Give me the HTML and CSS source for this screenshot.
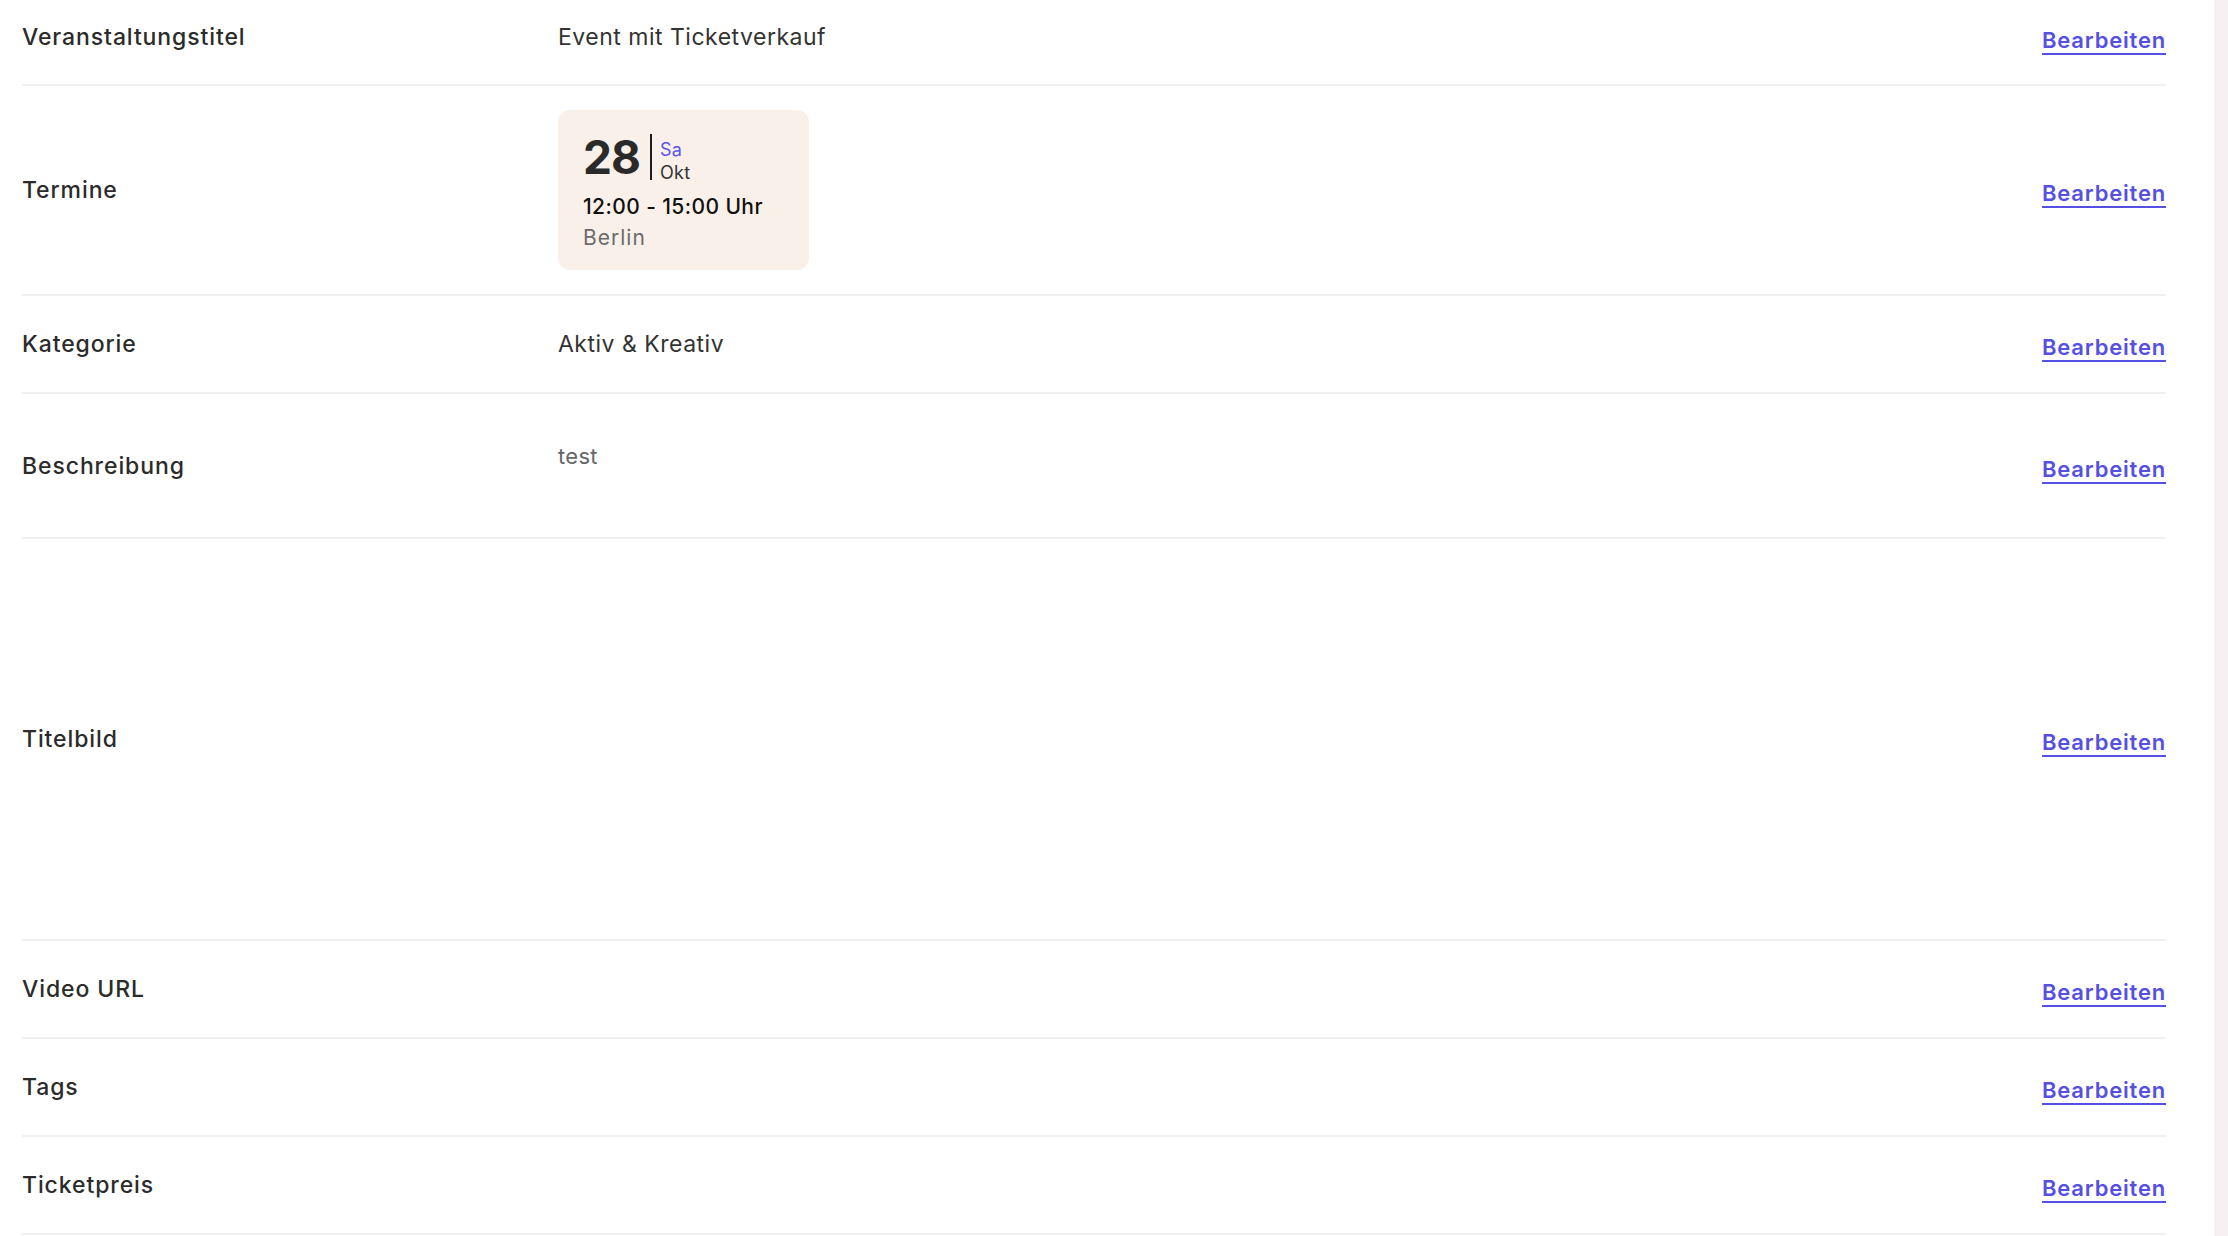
FILE: index.html
```html
<!DOCTYPE html>
<html lang="de">
<head>
    <meta charset="UTF-8">
    <meta name="viewport" content="width=device-width, initial-scale=1.0">
    <title>Veranstaltung - Übersicht</title>
    <link rel="stylesheet" href="styles.css">
</head>
<body>
    <div class="page">
        <main class="summary">
            <div class="summary-list">

                <div class="summary-row">
                    <div class="row-label">Veranstaltungstitel</div>
                    <div class="row-value">Event mit Ticketverkauf</div>
                    <a href="#" class="edit-link">Bearbeiten</a>
                </div>

                <div class="summary-row">
                    <div class="row-label">Termine</div>
                    <div class="row-value">
                        <div class="date-card">
                            <div class="date-head">
                                <span class="date-day">28</span>
                                <span class="date-meta">
                                    <span class="date-weekday">Sa</span>
                                    <span class="date-month">Okt</span>
                                </span>
                            </div>
                            <div class="date-time">12:00 - 15:00 Uhr</div>
                            <div class="date-place">Berlin</div>
                        </div>
                    </div>
                    <a href="#" class="edit-link">Bearbeiten</a>
                </div>

                <div class="summary-row">
                    <div class="row-label">Kategorie</div>
                    <div class="row-value">Aktiv &amp; Kreativ</div>
                    <a href="#" class="edit-link">Bearbeiten</a>
                </div>

                <div class="summary-row">
                    <div class="row-label">Beschreibung</div>
                    <div class="row-value">
                        <div class="description">test</div>
                    </div>
                    <a href="#" class="edit-link">Bearbeiten</a>
                </div>

                <!-- Titelbild: image area stays empty until one is uploaded -->
                <div class="summary-row">
                    <div class="row-label">Titelbild</div>
                    <div class="row-value">
                        <div class="cover-image"></div>
                    </div>
                    <a href="#" class="edit-link">Bearbeiten</a>
                </div>

                <div class="summary-row">
                    <div class="row-label">Video URL</div>
                    <div class="row-value"></div>
                    <a href="#" class="edit-link">Bearbeiten</a>
                </div>

                <div class="summary-row">
                    <div class="row-label">Tags</div>
                    <div class="row-value"></div>
                    <a href="#" class="edit-link">Bearbeiten</a>
                </div>

                <div class="summary-row">
                    <div class="row-label">Ticketpreis</div>
                    <div class="row-value"></div>
                    <a href="#" class="edit-link">Bearbeiten</a>
                </div>

            </div>
        </main>
        <aside class="side-strip"></aside>
    </div>
</body>
</html>
```

FILE: styles.css
```css
body {
    margin: 0;
    font-family: Inter, "Liberation Sans", sans-serif;
    color: #2d2d2d;
    background-color: #fff;
}

.page {
    display: flex;
    height: 1236px;
    overflow: hidden;
}

.summary {
    flex: 1;
    padding: 0 48px 0 22px;
}

/* list is scrolled a little, first row is cut at the top */
.summary-list {
    margin-top: -11px;
}

.summary-list .summary-row:first-child {
    padding-bottom: 23px;
}

.side-strip {
    width: 14px;
    background-color: #f6f0f3;
}

.summary-row {
    display: grid;
    grid-template-columns: 536px 1fr auto;
    align-items: center;
    padding: 24px 0;
    border-bottom: 2px solid #f0f0f0;
}

.row-label {
    font-size: 23px;
    font-weight: 500;
    color: #2b2b2b;
    letter-spacing: 0.9px;
}

.row-value {
    font-size: 23px;
    color: #333;
    letter-spacing: 0.5px;
}

.edit-link {
    padding-top: 6px;
    font-size: 22px;
    font-weight: 600;
    line-height: 42px;
    color: #5650e2;
    letter-spacing: 0.8px;
    text-decoration: underline;
    text-decoration-thickness: 2px;
    text-underline-offset: 5px;
}

/* Date card */
.date-card {
    width: 251px;
    box-sizing: border-box;
    padding: 24px 20px 16px 25px;
    background-color: #f9f0ea;
    border-radius: 12px;
}

.date-head {
    display: flex;
    align-items: flex-end;
}

.date-day {
    font-size: 46px;
    font-weight: 700;
    line-height: 46px;
    color: #2a2a2a;
    letter-spacing: -1px;
    padding-right: 10px;
    border-right: 2px solid #1c1c1c;
}

.date-meta {
    display: flex;
    flex-direction: column;
    margin-bottom: -4px;
    padding-left: 8px;
    font-size: 18px;
    line-height: 23px;
    letter-spacing: 0.3px;
}

.date-weekday {
    color: #5b55ee;
}

.date-month {
    color: #333;
}

.date-time {
    margin-top: 12px;
    font-size: 21px;
    font-weight: 500;
    line-height: 30px;
    color: #111;
    letter-spacing: 0.4px;
}

.date-place {
    font-size: 21px;
    line-height: 32px;
    color: #6b6b6b;
    letter-spacing: 1px;
}

.description {
    min-height: 95px;
    box-sizing: border-box;
    padding-top: 26px;
    font-size: 22px;
    line-height: 24px;
    color: #666;
    letter-spacing: 0.3px;
}

.cover-image {
    height: 352px;
}
```
